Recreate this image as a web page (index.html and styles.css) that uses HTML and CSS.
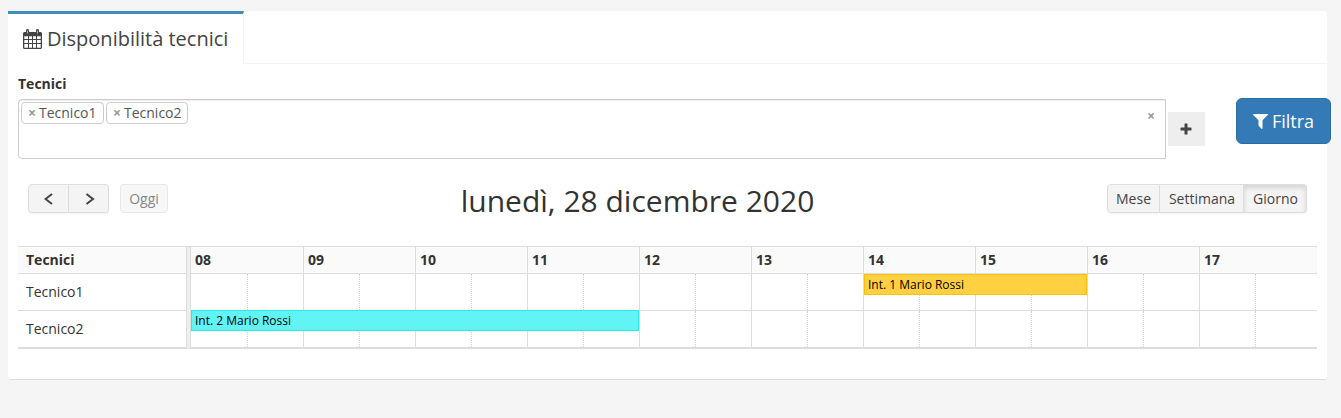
FILE: index.html
```html
<!DOCTYPE html>
<html lang="it">
<head>
<meta charset="utf-8">
<title>Disponibilità tecnici</title>
<link rel="stylesheet" href="styles.css">
</head>
<body>
<main class="panel">
  <nav class="tabs">
    <div class="tab">
      <svg class="tab-icon" width="19" height="20" viewBox="0 0 19 20">
        <path fill="#444" fill-rule="evenodd" d="M1.500 3H3V1.500C3 .6 3.600 0 4.500 0S6 .6 6 1.500V3h7V1.500C13 .6 13.600 0 14.500 0S16 .6 16 1.500V3h1.500c.8 0 1.500.7 1.500 1.500v14c0 .8-.7 1.500-1.500 1.500h-16C.7 20 0 19.300 0 18.500v-14C0 3.700.7 3 1.500 3zM1.300 7.200V10H5V7.200zM6 7.200V10h3V7.200zM10 7.200V10h3V7.200zM14 7.200V10h3.700V7.200zM1.300 11v3H5v-3zM6 11v3h3v-3zM10 11v3h3v-3zM14 11v3h3.700v-3zM1.300 15v3.700H5V15zM6 15v3.700h3V15zM10 15v3.700h3V15zM14 15v3.700h3.700V15zM4.200 1.500v3h.6v-3zM14.200 1.500v3h.6v-3z"/>
      </svg>
      <span>Disponibilità tecnici</span>
    </div>
    <div class="tabs-rest"></div>
  </nav>
  <label class="label">Tecnici</label>
  <div class="filters">
    <div class="select">
      <span class="tag"><b class="x">×</b>Tecnico1</span>
      <span class="tag"><b class="x">×</b>Tecnico2</span>
      <b class="x clear">×</b>
    </div>
    <button class="add"><svg width="12" height="12" viewBox="0 0 12 12"><path fill="#444" d="M5 .5h2q.5 0 .5.5v3.500H11q.5 0 .5.500v2q0 .5-.5.5H7.500V11q0 .5-.5.5H5q-.5 0-.5-.5V7.500H1Q.5 7.500.5 7V5q0-.5.5-.5h3.500V1q0-.5.5-.5z"/></svg></button>
    <button class="filter"><svg width="15" height="15" viewBox="0 0 15 15"><path fill="#fff" d="M.6 0h13.800c.6 0 .8.600.4 1L9.500 6.300v8c0 .6-.6.800-1 .4L5.900 12c-.3-.3-.4-.4-.4-.8V6.300L.2 1C-.2.600 0 0 .6 0z"/></svg><span>Filtra</span></button>
  </div>
  <div class="toolbar">
    <div class="group">
      <button class="btn nav"><svg width="10" height="12" viewBox="0 0 10 12"><path d="M8 1L1.500 6 8 11" fill="none" stroke="#444" stroke-width="2"/></svg></button>
      <button class="btn nav next"><svg width="10" height="12" viewBox="0 0 10 12"><path d="M1.500 1L8 6l-6.500 5" fill="none" stroke="#444" stroke-width="2"/></svg></button>
    </div>
    <button class="btn today">Oggi</button>
    <h2 class="date">lunedì, 28 dicembre 2020</h2>
    <div class="group">
      <button class="btn month">Mese</button>
      <button class="btn week">Settimana</button>
      <button class="btn day">Giorno</button>
    </div>
  </div>
  <section class="schedule">
    <div class="names">
      <div class="head name">Tecnici</div>
      <div class="row name">Tecnico1</div>
      <div class="row name">Tecnico2</div>
    </div>
    <div class="divider"></div>
    <div class="times">
      <div class="head slots">
        <div class="hour">08</div><div class="hour">09</div><div class="hour">10</div><div class="hour">11</div><div class="hour">12</div><div class="hour">13</div><div class="hour">14</div><div class="hour">15</div><div class="hour">16</div><div class="hour">17</div>
      </div>
      <div class="row slots">
        <div class="cell"></div><div class="cell"></div><div class="cell"></div><div class="cell"></div><div class="cell"></div><div class="cell"></div><div class="cell"></div><div class="cell"></div><div class="cell"></div><div class="cell"></div>
        <div class="event yellow">Int. 1 Mario Rossi</div>
      </div>
      <div class="row slots">
        <div class="cell"></div><div class="cell"></div><div class="cell"></div><div class="cell"></div><div class="cell"></div><div class="cell"></div><div class="cell"></div><div class="cell"></div><div class="cell"></div><div class="cell"></div>
        <div class="event cyan">Int. 2 Mario Rossi</div>
      </div>
    </div>
  </section>
</main>
</body>
</html>
```
FILE: styles.css
```css
* { box-sizing: border-box; }
body {
  margin: 0;
  padding: 11px 14px 0 8px;
  background: #f5f5f5;
  color: #333;
  font: 14px/20px "Open Sans", sans-serif;
}
button { font: inherit; color: inherit; margin: 0; padding: 0; }
.panel {
  height: 369px;
  background: #fff;
  border-bottom: 1px solid #dcdcdc;
  border-radius: 3px;
}
.tabs { display: flex; height: 53px; }
.tab {
  display: flex;
  align-items: center;
  gap: 5px;
  width: 236px;
  padding: 0 0 0 15px;
  border-top: 3px solid #3c8dbc;
  border-right: 1px solid #f4f4f4;
  font-size: 20px;
  color: #444;
  white-space: nowrap;
}
.tab-icon { flex: none; }
.tabs-rest { flex: 1; border-bottom: 1px solid #f4f4f4; }
.label { display: block; height: 35px; padding: 10px 10px 0; font-weight: 700; }
.filters { display: flex; align-items: flex-start; height: 61px; padding-left: 10px; margin-right: -4px; }
.select {
  display: flex;
  align-items: flex-start;
  gap: 2px;
  width: 1148px;
  height: 60px;
  padding: 2px;
  border: 1px solid #ccc;
  border-radius: 4px 0 0 4px;
  box-shadow: inset 0 1px 1px rgba(0, 0, 0, .075);
}
.tag {
  display: flex;
  align-items: center;
  width: 83px;
  height: 22px;
  padding-left: 6px;
  border: 1px solid #ccc;
  border-radius: 4px;
  color: #555;
}
.tag + .tag { width: 82px; }
.x { width: 11px; font-size: 14px; color: #999; }
.clear { margin: 4px 5px 0 auto; }
.add {
  display: grid;
  place-items: center;
  width: 37px;
  height: 34px;
  margin: 13px 31px 0 2px;
  padding-right: 1px;
  border: 0;
  background: #eee;
}
.filter {
  display: flex;
  align-items: center;
  justify-content: center;
  gap: 4px;
  width: 95px;
  height: 46px;
  margin-top: -1px;
  border: 1px solid #2e6da4;
  border-radius: 6px;
  background: #337ab7;
  color: #fff;
  font-size: 18px;
}
.toolbar { display: flex; align-items: flex-start; margin-top: 24px; height: 62px; padding: 0 20px; }
.group { display: flex; border-radius: 4px; box-shadow: 0 1px 2px rgba(0, 0, 0, .05); }
.btn {
  display: grid;
  place-items: center;
  height: 29px;
  border: 1px solid #ddd;
  border-radius: 4px;
  background: #f4f4f4;
  color: #444;
}
.group .btn + .btn { border-left: 0; border-top-left-radius: 0; border-bottom-left-radius: 0; }
.group .btn:not(:last-child) { border-top-right-radius: 0; border-bottom-right-radius: 0; }
.nav { width: 41px; }
.nav + .nav { width: 40px; }
.next { padding-left: 2px; }
.today { width: 48px; margin-left: 11px; opacity: .65; }
.date { margin: 0 auto; font-size: 30px; line-height: 33px; font-weight: 400; white-space: nowrap; }
.month { width: 53px; }
.week { width: 84px; padding-left: 1px; }
.day { width: 63px; padding-left: 1px; box-shadow: inset 0 3px 5px rgba(0, 0, 0, .125); }
.schedule {
  display: grid;
  grid-template-columns: 168px 5px 1fr;
  height: 103px;
  margin: 0 10px;
  border-top: 1px solid #ddd;
  border-bottom: 1px solid #ddd;
}
.head { height: 27px; border-bottom: 1px solid #ddd; background: #fafafa; font-weight: 700; }
.row { height: 37px; border-bottom: 1px solid #ddd; }
.name { padding: 3px 8px; }
.row.name { padding-top: 8px; }
.divider { border: solid #ddd; border-width: 0 1px; background: #eee; }
.slots { position: relative; display: grid; grid-template-columns: repeat(9, 112px) 1fr; }
.hour { padding: 3px 4px; }
.hour, .cell { border-right: 1px solid #ddd; }
.hour:first-child, .cell:first-child { width: 113px; }
.hour + .hour, .cell + .cell { margin-left: 1px; margin-right: -1px; }
.hour:nth-child(10), .cell:nth-child(10) { border-right: 0; margin-right: 0; }
.cell::before { content: ""; display: block; width: 56px; height: 100%; border-right: 1px dotted #d0d0d0; }
.cell:first-child::before { width: 57px; margin-left: -1px; }
.cell + .cell::before { margin-left: -1px; }
.event {
  position: absolute;
  height: 21px;
  padding: 0 3px;
  border: 1px solid;
  color: #000;
  font-size: 12px;
  line-height: 19px;
}
.yellow { left: 673px; top: 0; width: 223px; background: #ffd042; border-color: #ffc107; }
.cyan { left: 0; top: -1px; width: 448px; background: #62f4f4; border-color: #2be9e9; }
```
